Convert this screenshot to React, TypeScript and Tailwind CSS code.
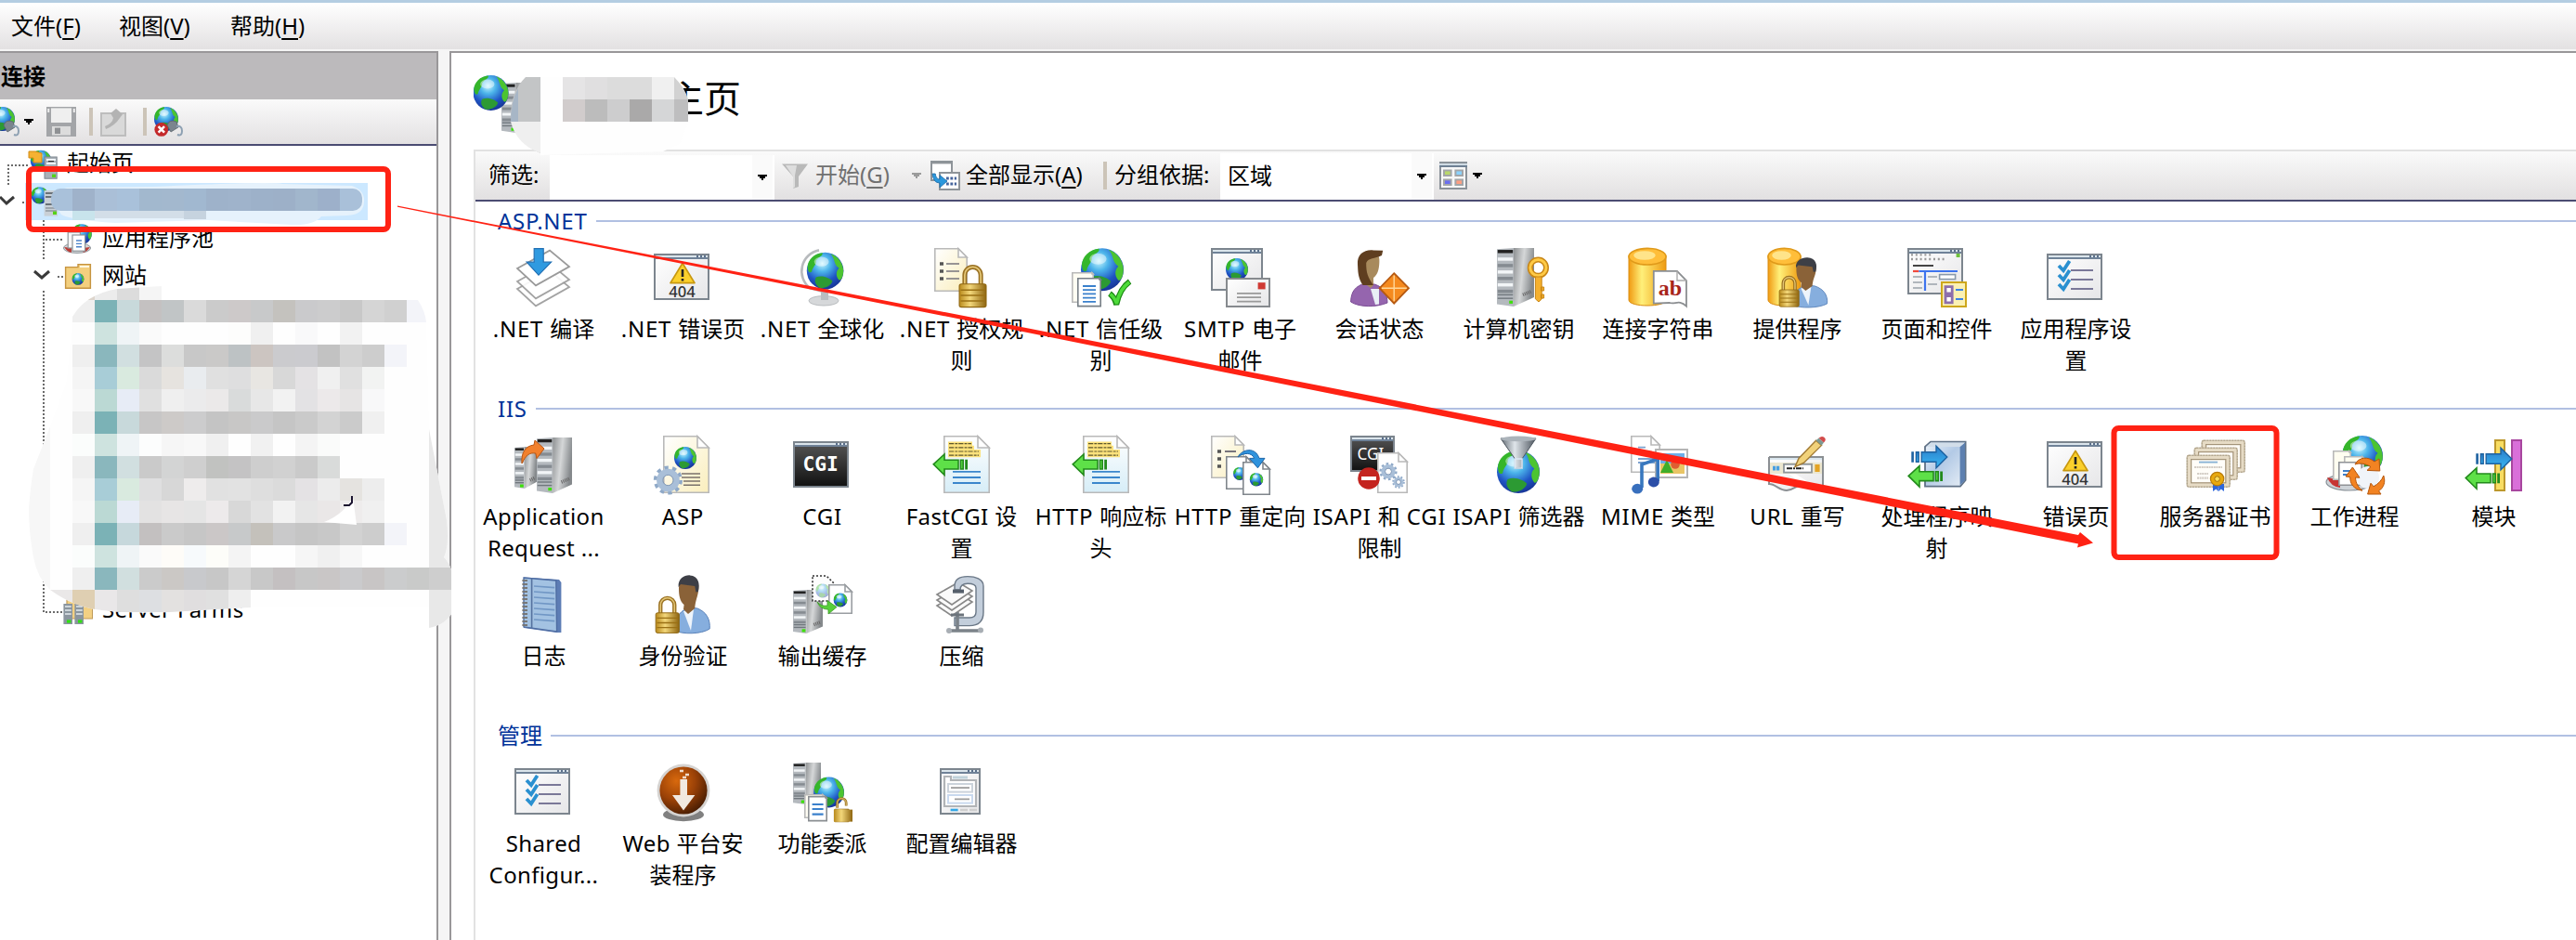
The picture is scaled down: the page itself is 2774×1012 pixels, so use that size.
import React from 'react';

type Box = { x: number; y: number; w: number; h: number };

const Defs: React.FC = () => (
  <svg width="0" height="0" className="absolute">
    <defs>
      <radialGradient id="sea" cx="0.42" cy="0.3" r="0.75">
        <stop offset="0" stopColor="#c8f6ff" />
        <stop offset="0.3" stopColor="#4cb4ea" />
        <stop offset="0.65" stopColor="#1f55c4" />
        <stop offset="1" stopColor="#16308f" />
      </radialGradient>
      <linearGradient id="steel" x1="0" y1="0" x2="1" y2="0.3">
        <stop offset="0" stopColor="#8d9092" />
        <stop offset="0.5" stopColor="#d5d7d8" />
        <stop offset="1" stopColor="#85898c" />
      </linearGradient>
      <linearGradient id="gold" x1="0" y1="0" x2="1" y2="0">
        <stop offset="0" stopColor="#b98a1c" />
        <stop offset="0.4" stopColor="#f3d77a" />
        <stop offset="1" stopColor="#8e6510" />
      </linearGradient>
      <linearGradient id="drum" x1="0" y1="0" x2="1" y2="0">
        <stop offset="0" stopColor="#f09a12" />
        <stop offset="0.35" stopColor="#fff07a" />
        <stop offset="1" stopColor="#ee9a10" />
      </linearGradient>
      <linearGradient id="paper" x1="0" y1="0" x2="1" y2="1">
        <stop offset="0" stopColor="#ffffff" />
        <stop offset="1" stopColor="#faeebc" />
      </linearGradient>
      <linearGradient id="bluePaper" x1="0" y1="0" x2="0" y2="1">
        <stop offset="0" stopColor="#ffffff" />
        <stop offset="1" stopColor="#d6edf7" />
      </linearGradient>
      <linearGradient id="pane" x1="0" y1="0" x2="1" y2="1">
        <stop offset="0" stopColor="#ffffff" />
        <stop offset="1" stopColor="#e6e6e8" />
      </linearGradient>
      <linearGradient id="night" x1="0" y1="0" x2="0" y2="1">
        <stop offset="0" stopColor="#555" />
        <stop offset="1" stopColor="#111" />
      </linearGradient>
      <linearGradient id="blueArrow" x1="0" y1="0" x2="0" y2="1">
        <stop offset="0" stopColor="#2b7cc8" />
        <stop offset="1" stopColor="#39b8f4" />
      </linearGradient>
      <linearGradient id="slab" x1="0" y1="0" x2="1" y2="1">
        <stop offset="0" stopColor="#eef4fa" />
        <stop offset="0.45" stopColor="#b3cae6" />
        <stop offset="1" stopColor="#e8eff6" />
      </linearGradient>
      <radialGradient id="amber" cx="0.35" cy="0.3" r="0.8">
        <stop offset="0" stopColor="#d8690d" />
        <stop offset="0.5" stopColor="#9c4207" />
        <stop offset="1" stopColor="#3c1802" />
      </radialGradient>
      <linearGradient id="funnelFill" x1="0" y1="0" x2="1" y2="0">
        <stop offset="0" stopColor="#5f676f" />
        <stop offset="0.4" stopColor="#dfe5ea" />
        <stop offset="1" stopColor="#4b535c" />
      </linearGradient>
    </defs>
  </svg>
);

const Globe = ({ x, y, r }: { x: number; y: number; r: number }) => (
  <g transform={`translate(${x} ${y}) scale(${r / 10})`}>
    <circle r="10" fill="url(#sea)" />
    <path d="M-9.6-2C-9.5-6-6-9.6-1.5-9.8-1-8-4-7.5-5-5.5-4.5-3.5-7-2-7.3.5-8.5 1.5-9.3.5-9.6-2Z" fill="#35b62a" />
    <path d="M3-9.3C7-8 9.8-4 9.9 0 9.8 3.5 8.5 5.5 7.5 5 5.5 2.5 6 0 7.5-1.5 4.5-3.5 5.5-6.5 3-9.3Z" fill="#4cc431" />
    <path d="M-5 3.5C-1.5 2 2.5 4 4 5.5 3.5 8-.5 9.8-3 9.3-5.5 7.5-6 5.5-5 3.5Z" fill="#2c9a33" />
    <ellipse cx="-2" cy="-5" rx="4" ry="2.6" fill="#fff" opacity="0.45" />
  </g>
);

const Server = ({ x, y, w, h }: Box) => {
  const f = w * 0.45;
  return (
    <g>
      <path d={`M${x + f} ${y}H${x + w}V${y + h * 0.84}L${x + f} ${y + h}Z`} fill="url(#steel)" />
      <path d={`M${x} ${y + h * 0.02}L${x + f} ${y}V${y + h}L${x} ${y + h * 0.96}Z`} fill="#b4b9be" />
      {[0.06, 0.19, 0.3, 0.41, 0.52, 0.63, 0.74].map((t, i) => (
        <path key={t} d={`M${x + 0.4} ${y + h * t}H${x + f - 0.4}`} stroke={i === 0 ? '#222' : i % 2 ? '#f2f5f7' : '#858b91'} strokeWidth={h * 0.055} />
      ))}
      {[0.8, 0.86].map((t) => (
        <path key={t} d={`M${x + 0.4} ${y + h * t}H${x + f - 0.4}`} stroke="#70777d" strokeWidth="0.7" />
      ))}
      <rect x={x + f - 2.4} y={y + h * 0.9} width="1.9" height="1.6" fill="#3ee00c" />
      <path d={`M${x + f + w * 0.25} ${y + h * 0.8}l${w * 0.22} ${-h * 0.06}`} stroke="#666" strokeWidth="1.8" strokeDasharray="0.5 0.5" />
    </g>
  );
};

const Doc = ({ x, y, w, h, fill = '#fff', stroke = '#b9b9b9', fold = 5 }: Box & { fill?: string; stroke?: string; fold?: number }) => (
  <g fill={fill} stroke={stroke} strokeWidth="0.8">
    <path d={`M${x + 0.4} ${y + 0.4}H${x + w - fold}L${x + w - 0.4} ${y + fold}V${y + h - 0.4}H${x + 0.4}Z`} />
    <path d={`M${x + w - fold} ${y + 0.4}V${y + fold}H${x + w - 0.4}Z`} fill="#fff" />
  </g>
);

const Frame = ({ x, y, w, h, fill = 'url(#pane)' }: Box & { fill?: string }) => (
  <g>
    <rect x={x + 0.5} y={y + 0.5} width={w - 1} height={h - 1} fill={fill} stroke="#7c858e" />
    <path d={`M${x + 1} ${y + 1.5}H${x + w - 1}`} stroke="#dbe5ec" />
    <path d={`M${x + 1} ${y + 2.5}H${x + w - 1}`} stroke="#6f8298" />
    <path d={`M${x + w - 7} ${y + 1.5}h6`} stroke="#5a6f8b" strokeDasharray="1 1" />
  </g>
);

const Lock = ({ x, y, s, open }: { x: number; y: number; s: number; open?: boolean }) => (
  <g transform={`translate(${x} ${y}) scale(${s})`}>
    <path d={open ? 'M3 9V4.5A4 4 0 0 1 11 4.5V7' : 'M3 11V5.5A4 4 0 0 1 11 5.5V11'} fill="none" stroke="#9a7122" strokeWidth="2.3" />
    <path d={open ? 'M3 9V4.5A4 4 0 0 1 11 4.5V7' : 'M3 11V5.5A4 4 0 0 1 11 5.5V11'} fill="none" stroke="#e5c878" strokeWidth="0.8" />
    <rect x="0.3" y="10" width="13.4" height="11.5" rx="1" fill="url(#gold)" stroke="#8e6510" strokeWidth="0.5" />
    <path d="M1 13h12M1 15.7h12M1 18.4h12" stroke="#9a7014" strokeWidth="0.7" />
  </g>
);

const Drum = ({ w }: { w: number }) => (
  <g>
    <path d={`M0 4V28C0 32 ${w} 32 ${w} 28V4Z`} fill="url(#drum)" stroke="#d98c10" strokeWidth="0.5" />
    <ellipse cx={w / 2} cy="4.6" rx={w / 2} ry="4.4" fill="#ffbe3a" stroke="#e09a1a" strokeWidth="0.8" />
    <ellipse cx={w / 2 - 1.5} cy="4" rx={w / 3.4} ry="2.4" fill="#ffe48a" />
  </g>
);

const Man = ({ x, y }: { x: number; y: number }) => (
  <g transform={`translate(${x} ${y})`}>
    <path d="M0 30C0 22 3 19 8 17.5L12 18C17 20 19 24 18.6 29 14 32 4 32 0 30Z" fill="#86aede" stroke="#5b83b9" strokeWidth="0.5" />
    <path d="M4.5 19.5L8.5 30 10 18.5Z" fill="#eef4fb" />
    <path d="M2 7C2 3 4.5.8 8 .8S13 4 12.6 8 11 13 10.6 18L7 21 4.5 18.5 4.8 16C2.5 14 2 11 2 7Z" fill="#8a6238" />
    <path d="M1.8 6.5C1.5 2 5 0 8 .2 12.5.6 13.6 4.5 12.4 9L11.2 9.2 10.6 6 3 5Z" fill="#3d3f46" />
  </g>
);

const LeftArrow = ({ x, y }: { x: number; y: number }) => (
  <g transform={`translate(${x} ${y})`} fill="#5ee048" stroke="#238a1c" strokeWidth="0.8">
    <path d="M.6 6L6.5.6V3.7H14V8.6H6.5V11.8Z" />
    <path d="M15.2 3.7h1.4v4.9h-1.4ZM18 3.9h.6v4.5H18Z" />
  </g>
);

const RightArrow = ({ x, y }: { x: number; y: number }) => (
  <g transform={`translate(${x} ${y})`} fill="url(#blueArrow)" stroke="#1e62a0" strokeWidth="0.7">
    <path d="M19.4 6.5L13.5.6V3.9H5.6V9.1H13.5V12.4Z" />
    <path d="M2.7 3.9h1.4v5.2H2.7ZM.5 4h.6v5H.5Z" />
  </g>
);

const Gear = ({ x, y, r }: { x: number; y: number; r: number }) => (
  <g fill="none" stroke="#8fa9c8">
    <circle cx={x} cy={y} r={r * 0.86} strokeWidth={r * 0.28} strokeDasharray={`${r * 0.27} ${r * 0.27}`} />
    <circle cx={x} cy={y} r={r * 0.58} strokeWidth={r * 0.42} stroke="#a9bfd8" />
    <circle cx={x} cy={y} r={r * 0.36} strokeWidth="0.5" stroke="#7a93b3" />
  </g>
);

const Error404 = () => (
  <>
    <Frame x={0} y={3} w={30} h={25} />
    <path d="M15.5 8.2L22 18.8H9Z" fill="#fbd02c" stroke="#c89810" strokeWidth="0.9" strokeLinejoin="round" />
    <path d="M15.5 11.5v4M15.5 16.5v1.2" stroke="#222" strokeWidth="1.3" />
    <text x="15.3" y="26.4" textAnchor="middle" fontSize="8.3" fontFamily="Noto Sans, sans-serif" fontWeight="500" fill="#333">404</text>
  </>
);

const ArrowDoc = () => (
  <>
    <Doc x={6} y={0} w={25} h={31} fill="url(#bluePaper)" fold={6.5} />
    <path d="M8.5 4.3H21.5M8.5 6.4H22.5M8.5 8.5H26M8.5 10.6H26" stroke="#fce27c" strokeWidth="2.1" />
    <path d="M9 4.3H21M9 6.4H21.5M9 8.5H25M9 10.6H25" stroke="#5d572d" strokeWidth="0.6" strokeDasharray="2.6 0.6 1.4 0.5" />
    <path d="M11 19.4H26M11 22.5H26M11 25.5H26" stroke="#3a86cc" strokeWidth="0.9" />
    <LeftArrow x={0} y={9.4} />
  </>
);

const Checklist = () => (
  <>
    <Frame x={0} y={3} w={30} h={25} />
    {[8, 13, 18].map((y) => (
      <g key={y}>
        <path d={`M6.5 ${y + 1.5}l2.5 2.6L12.3 ${y - 1}`} fill="none" stroke="#2a90d0" strokeWidth="1.9" />
        <path d={`M13 ${y + 4}H25`} stroke="#7a7898" strokeWidth="1" />
      </g>
    ))}
  </>
);

const FEATURE_ICONS: Record<string, React.ReactNode> = {
  compile: (
    <>
      {[11, 7, 0].map((dy) => (
        <path key={dy} d={`M1.5 ${dy + 11}L19 ${dy + 1.3}L29.5 ${dy + 10}L11.5 ${dy + 20.2}Z`} fill="#fff" stroke="#9a9a9a" strokeWidth="0.9" opacity={dy ? 0.9 : 1} />
      ))}
      <path d="M10.6.3h5v7.3h4.2L13 14.6 6.6 7.6h4Z" fill="#2f9ae0" stroke="#2270b4" strokeWidth="0.6" />
    </>
  ),
  error404: <Error404 />,
  globalization: (
    <>
      <ellipse cx="16.5" cy="28.4" rx="8" ry="2.6" fill="#d6d8da" stroke="#b9bcbf" strokeWidth="0.5" />
      <path d="M15 22h4v6h-4Z" fill="#b9bdc0" />
      <path d="M14 1.2A11.5 11.5 0 0 0 9 21.5L18 24" fill="none" stroke="#b7babd" strokeWidth="1.3" />
      <Globe x={17.3} y={12.3} r={9.9} />
    </>
  ),
  authRules: (
    <>
      <Doc x={1} y={0} w={18} h={23.5} fill="url(#paper)" />
      <path d="M7.5 8.5h7M7.5 12.5h7M7.5 16.5h7" stroke="#77747c" strokeWidth="0.8" />
      <path d="M4 8.5h2M4 12.5h2M4 16.5h2" stroke="#555" strokeWidth="1.8" />
      <Lock x={14.2} y={8.6} s={1.08} />
    </>
  ),
  trust: (
    <>
      <Globe x={16.5} y={11.6} r={11.5} />
      <Doc x={0} y={13} w={12} h={16.5} fill="#fffdf3" fold={1} />
      <Doc x={3} y={16} w={13} h={15.7} fold={1} stroke="#777f86" />
      <path d="M6 20.5h7M6 22.6h7M6 24.7h7M6 26.8h7M6 28.9h7" stroke="#3a80cc" strokeWidth="0.9" />
      <path d="M20.5 24.5c2 1.5 3 3.5 3.6 6 1-5 3-9.5 7.2-12.5" fill="none" stroke="#1c8a14" strokeWidth="3" />
      <path d="M20.8 24.8c2 1.5 2.8 3.2 3.4 5.2 1-5 3-8.8 6.8-11.6" fill="none" stroke="#4edb3a" strokeWidth="1.8" />
    </>
  ),
  smtp: (
    <>
      <Frame x={0} y={0} w={28} h={23} />
      <Globe x={14} y={11.5} r={6} />
      <rect x="8.5" y="16.5" width="23" height="15" fill="url(#pane)" stroke="#868a8e" />
      <rect x="25.3" y="18.6" width="4" height="3.6" fill="#cf3a34" />
      <path d="M14 24.4h13M14 26.6h13M14 28.8h13" stroke="#999" strokeWidth="0.9" />
    </>
  ),
  session: (
    <>
      <path d="M.3 29C.5 23 3 20.5 8 19L13 19.5C18 21 20 25 20 29.5 14 32 5 32 .3 29Z" fill="#9565ae" stroke="#7b4d95" strokeWidth="0.5" />
      <path d="M11 22l2.5 8.5 2-.3V22Z" fill="#e9eef6" />
      <path d="M5.5 8C5 4 8 2 11.5 2 15.5 2.3 16 5 15.6 9 15.3 13 14 15 12.5 16V20L11 21.5 7.5 19V14C6 12 5.6 10 5.5 8Z" fill="#a88a5d" />
      <path d="M4 9C3.5 3 8 .6 12.5 1.2L17.6 1.4 17 4C13 6 10 5 8.6 8 8.5 13 9.5 16 12.5 20H6.8C4 16 4.2 12 4 9Z" fill="#5f3e20" />
      <path d="M23.6 13.6L31.5 21.6 23.6 29.8 15.8 21.6Z" fill="#f58a1e" stroke="#b65a12" strokeWidth="0.9" />
      <path d="M23.6 14.8V28.6M17 21.6H30.4" stroke="#ffd79a" strokeWidth="0.7" />
    </>
  ),
  machineKey: (
    <>
      <Server x={4} y={0} w={20} h={31.5} />
      <circle cx="26.2" cy="10.6" r="4.3" fill="none" stroke="#c98716" strokeWidth="3" />
      <circle cx="26.2" cy="10.6" r="4.3" fill="none" stroke="#ffca45" strokeWidth="1.5" />
      <path d="M24.7 15.5h3.4v12L26.5 29l-1.8-1.6Zm3 5.5h1.6v2h-1.6Zm0 4h1.6v2h-1.6Z" fill="#f5b02e" stroke="#c98716" strokeWidth="0.5" />
    </>
  ),
  connStrings: (
    <>
      <Drum w={20} />
      <path d="M13.4 12.4H26L31 17.5V31.3C27 27.5 25 30.5 22 29.5L13.4 29.8Z" fill="#fff" stroke="#8b8e91" strokeWidth="0.9" />
      <path d="M26 12.4V17.5H31" fill="none" stroke="#aaa" strokeWidth="0.7" />
      <text x="22.2" y="25.5" textAnchor="middle" fontSize="12" fontWeight="bold" fontFamily="Liberation Serif, serif" fill="#a8251c">ab</text>
    </>
  ),
  providers: (
    <>
      <Drum w={17.5} />
      <g transform="translate(13.2 5) scale(1 .86)"><Man x={0} y={0} /></g>
      <Lock x={5.8} y={14.6} s={0.79} />
    </>
  ),
  pages: (
    <>
      <Frame x={0} y={0} w={30} h={25} />
      <path d="M2 3.7h12M2 6h18" stroke="#999" strokeWidth="1.2" strokeDasharray="1 1.4" />
      <path d="M26.3 3h2v2h-2Z" fill="#6fc23c" />
      <path d="M3 9.5h11" stroke="#444" />
      <path d="M3 12.5h3.2" stroke="#f0483c" strokeWidth="1.1" />
      <path d="M6.2 12.5H27M9.5 12.5V23" stroke="#3e74ee" strokeWidth="1.1" />
      <path d="M3 15.5h5M3 18.5h5M3 21.5h5M11 15.5h5M11 19.5h5" stroke="#9ba2ab" strokeWidth="0.8" />
      <rect x="17.3" y="14.3" width="8.5" height="2.5" fill="#fff" stroke="#8999aa" strokeWidth="0.8" />
      <rect x="18.5" y="18.5" width="13" height="13" fill="#fbf1b4" stroke="#cda71c" />
      <path d="M20.5 20.8h3.6v3.6h-3.6ZM20.5 25.8h3.6v3.6h-3.6Z" fill="#fff" stroke="#8d6fac" strokeWidth="1.4" />
      <path d="M26 22.5h4M26 27.5h4" stroke="#3b83e4" strokeWidth="0.9" />
    </>
  ),
  checklist: <Checklist />,
  arr: (
    <>
      <Server x={0} y={6} w={12} h={22.5} />
      <Server x={12} y={1} w={19} h={30} />
      <path d="M4 15C3.5 9 6 5.5 10.5 5L11 2.5 16 7 12 12.3 11.4 9.5C8 9 6.2 10.5 4 15Z" fill="#f2802c" stroke="#b95512" strokeWidth="0.5" />
    </>
  ),
  asp: (
    <>
      <Doc x={5} y={0} w={25} h={31} fill="url(#paper)" fold={6.5} />
      <Globe x={17} y={12} r={6} />
      <path d="M15 20.5H25M15 22.5H25M16 24.5H25M16 26.6H25" stroke="#79716b" strokeWidth="0.7" />
      <Gear x={7.7} y={24} r={7.8} />
    </>
  ),
  cgi: (
    <>
      <Frame x={0} y={3} w={30} h={25} fill="url(#night)" />
      <text x="14.8" y="18.8" textAnchor="middle" fontSize="10.6" fontWeight="bold" fontFamily="DejaVu Sans Mono, monospace" fill="#fff">CGI</text>
    </>
  ),
  arrowDoc: <ArrowDoc />,
  redirect: (
    <>
      <Doc x={0} y={0} w={18} h={23} fill="url(#paper)" />
      <path d="M7.5 8.5h6" stroke="#77747c" />
      <path d="M3.5 8.5h2M3.5 12.5h2M3.5 16.5h2" stroke="#555" strokeWidth="1.8" />
      <Doc x={8} y={11} w={15} h={18} stroke="#80868c" fold={4} />
      <Globe x={15.5} y={20.5} r={3.5} />
      <Doc x={17} y={14} w={15} h={18} stroke="#80868c" fold={4} />
      <Globe x={24.5} y={23.7} r={3.6} />
      <path d="M14.5 11.5C17 7 24 6 26 12.2h3L25.2 17.4 20.8 12.2h2.5C22 9 18 9 14.5 11.5Z" fill="#2f93dd" stroke="#1f66a8" strokeWidth="0.5" />
    </>
  ),
  isapiCgi: (
    <>
      <Frame x={0} y={0} w={24} h={19.5} fill="url(#night)" />
      <text x="11" y="12.8" textAnchor="middle" fontSize="8.6" fontFamily="Noto Sans, sans-serif" fill="#fff">CGI</text>
      <Doc x={14.5} y={9} w={16.5} h={22} />
      <Gear x={20.5} y={19.3} r={4.8} />
      <Gear x={26} y={25} r={3.4} />
      <circle cx="10" cy="23" r="5.9" fill="#c4241f" />
      <path d="M6 23H14" stroke="#fff" strokeWidth="2" />
    </>
  ),
  isapiFilter: (
    <>
      <Globe x={15.5} y={19.5} r={11.5} />
      <path d="M6 1.5H25L17.5 12.5V17.5H13.7V12.5Z" fill="url(#funnelFill)" stroke="#4d565f" strokeWidth="0.5" />
      <ellipse cx="15.5" cy="1.7" rx="9.5" ry="1.4" fill="#abb3ba" />
      <path d="M13.7 12.5h3.8v5h-3.8Z" fill="none" stroke="#dce8f5" strokeWidth="0.8" />
    </>
  ),
  mime: (
    <>
      <Doc x={1} y={0} w={16} h={20} />
      <path d="M5 6.3h4M5 12.5h9M5 14.5h9" stroke="#7ea3cf" strokeWidth="0.9" />
      <rect x="14.5" y="7.5" width="17" height="15" fill="#fff" stroke="#b5b5b5" />
      <path d="M17 9.5H30V15H17Z" fill="#6caee9" />
      <path d="M17 15H30V20.5H17Z" fill="#e9c565" />
      <path d="M17 20L20.5 13 24 20Z" fill="#3fae2a" />
      <circle cx="25" cy="15.5" r="2.4" fill="#de5d33" />
      <path d="M7 28V15.5L15.6 12.5V24.5" fill="none" stroke="#3878bf" strokeWidth="1.8" />
      <ellipse cx="4.6" cy="28.6" rx="3" ry="2.7" fill="#386fbd" />
      <ellipse cx="13.4" cy="25" rx="3" ry="2.7" fill="#2c4fa8" />
    </>
  ),
  rewrite: (
    <>
      <path d="M.5 11.5H29.5V30M.5 11.5V26C4 26 6 29.5 10 29.5S15 26 19 27" fill="url(#pane)" stroke="#8b8f93" />
      <path d="M1 12.5H29" stroke="#d9e6ee" />
      <rect x="1" y="14.5" width="28" height="6" fill="#ece7d0" />
      <rect x="8.5" y="15.4" width="15" height="4.4" fill="#fff" stroke="#8e959b" strokeWidth="0.9" />
      <path d="M10 17.6h9" stroke="#222" strokeWidth="1" strokeDasharray="3 .5 1 .5" />
      <path d="M2.5 17.6h4" stroke="#4a9fe0" strokeWidth="2.4" strokeDasharray="1.6 .4" />
      <path d="M26.5 15.5v4" stroke="#e3a326" strokeWidth="2.6" />
      <path d="M14.5 16.8L16.5 12.2 25.8 2.6 28.8 5.2 19.3 14.6Z" fill="#f1d27a" stroke="#a17a34" strokeWidth="0.7" />
      <path d="M25.8 2.6L27.3 1.2 30 3.8 28.8 5.2Z" fill="#7d9a94" />
      <path d="M27.3 1.2Q29-.2 30.3 1T30 3.8Z" fill="#d34b4b" />
    </>
  ),
  handler: (
    <>
      <path d="M9.5 6L12.5 3.3H31.3V24L28.5 27.3H9.5Z" fill="url(#slab)" stroke="#5f7186" strokeWidth="0.9" />
      <path d="M28.3 6L31 3.6V24L28.3 26.8Z" fill="#5d80b0" />
      <path d="M10 6L12.6 3.8H31L28.3 6Z" fill="#d2deea" />
      <RightArrow x={2} y={5} />
      <LeftArrow x={0} y={15.7} />
    </>
  ),
  cert: (
    <>
      {[[8, 2], [4, 6], [0, 10]].map(([x, y]) => (
        <g key={x}>
          <rect x={x + 0.6} y={y + 0.6} width="23" height="17" rx="1" fill="#e6dbc5" stroke="#b3a68d" strokeWidth="0.8" strokeDasharray="1.2 0.3" />
          <rect x={x + 2.8} y={y + 2.8} width="18.6" height="12.6" fill="#fffdf8" stroke="#a49479" strokeWidth="0.6" />
        </g>
      ))}
      <path d="M7 14.3h10" stroke="#86b2d5" strokeWidth="0.9" />
      <path d="M4.5 17h15M6 20.5h6M6 22.8h6" stroke="#d3cdc5" strokeWidth="1.1" strokeDasharray="1 .3" />
      <path d="M14.5 26v4l1.7-1.2 1.2 1.2V26ZM17.6 26v4l1.3-1.2 1.6 1.2V26Z" fill="#2c66dc" />
      <circle cx="16.8" cy="23.3" r="3.6" fill="#e8a90e" stroke="#b87a08" strokeWidth="0.6" />
      <circle cx="16.8" cy="23.3" r="1.4" fill="#f9dc5b" stroke="#a66f0a" strokeWidth="0.5" />
    </>
  ),
  worker: (
    <>
      <Globe x={20} y={11} r={11} />
      <ellipse cx="13" cy="25" rx="12.5" ry="4.5" fill="#ced3d8" stroke="#8a9299" strokeWidth="0.6" />
      <path d="M1 22.5Q3 27.5 8 28V24Z" fill="#c73434" />
      <Doc x={4} y={8} w={10} h={16} fill="#fffdf0" fold={1} />
      <Doc x={10} y={11} w={11} h={15} fill="#fffdf0" fold={1} />
      <Doc x={7} y={14} w={13} h={13} fold={1} stroke="#8f9296" />
      <path d="M9.5 19h4M9.5 21h4" stroke="#3f7fc9" />
      <circle cx="23" cy="22.5" r="6" fill="#f0f4f9" />
      <g fill="#f28322" stroke="#b5560c" strokeWidth="0.5">
        <path d="M16 15.5C18 11.5 23 11 26.5 14L29 12.5 29.4 19 22.5 18.7 24.5 16.8C21.5 15 18.5 14.5 16 15.5Z" />
        <path d="M20 29.6C15.5 29 13.2 26 13.4 22.3L11 22 14.7 17 18.5 22.6 16.3 22.5C16.3 25.5 17.8 28 20 29.6Z" />
        <path d="M31.4 21.5C32.6 25 31.5 28 28.8 29.8L30 31.5 22.8 31.5 24.5 25.6 26 27.4C28.5 26 30.5 24 31.4 21.5Z" />
      </g>
    </>
  ),
  modules: (
    <>
      <rect x="16.5" y="2.5" width="5" height="27" fill="#f8dd62" stroke="#bd982c" />
      <rect x="25.5" y="2.5" width="5" height="27" fill="#d96fd9" stroke="#a8469f" />
      <RightArrow x={6} y={6} />
      <LeftArrow x={0} y={16.8} />
    </>
  ),
  logging: (
    <>
      <path d="M5 1.2L24 2.5 25.2 4V31H22.5L5 28.5Z" fill="#5d7db5" />
      <path d="M5 1.5L22.4 3 22.8 30.5 5 28Z" fill="#a3c2e2" stroke="#4f6da2" strokeWidth="0.7" />
      {[6, 9, 12, 15, 18, 21, 24].map((y) => (
        <path key={y} d={`M10.5 ${y}L21.6 ${y + 0.8}`} stroke="#7197c5" strokeWidth="0.8" />
      ))}
      <path d="M9.3 2V28.5" stroke="#55729f" strokeWidth="0.8" />
      <path d="M5.6 2.5V28" stroke="#777" strokeWidth="2.8" strokeDasharray="1 1" />
    </>
  ),
  authn: (
    <>
      <g transform="translate(11 0)"><Man x={0.5} y={0} /></g>
      <Lock x={0.8} y={11} s={0.94} />
    </>
  ),
  cache: (
    <>
      <Server x={0} y={8} w={16} h={23.5} />
      <path d="M10.5.5H18L22 4.5V14H10.5Z" fill="#fdfdfd" stroke="#333" strokeWidth="0.8" strokeDasharray="1 1" />
      <g opacity="0.4"><Globe x={16} y={8.5} r={3.8} /></g>
      <Doc x={19} y={5} w={13} h={16} stroke="#9a9ea2" fold={4} />
      <Globe x={25.5} y={13.5} r={3.7} />
      <path d="M13 14.5Q15 17 18.5 16.5V13.8L23.5 17.3 19 21V18.6Q14.5 18.5 13 14.5Z" fill="#58cf3a" stroke="#3b9a25" strokeWidth="0.4" />
    </>
  ),
  compress: (
    <>
      {[6, 3, 0].map((dy) => (
        <path key={dy} d={`M2.5 ${dy + 10.5}L14 ${dy + 4}L21.5 ${dy + 8.5}L10.5 ${dy + 16}Z`} fill="#fafafa" stroke="#888" strokeWidth="0.8" />
      ))}
      <path d="M12 8V6C12 2 15 .8 19 .8S27.5 2 27.5 6V20C27.5 25.5 24 27.3 20 27.3H12V23H20C22.5 23 23.5 22 23.5 20V7C23.5 5 21.5 4.6 19 4.6S15 5.5 15 8Z" fill="#c3cedb" stroke="#6b7887" strokeWidth="0.7" />
      <path d="M11 8.8h6" stroke="#555f6b" strokeWidth="2" />
      <path d="M13.5 20v10M8 30H26" stroke="#7b8289" strokeWidth="1.8" />
      <circle cx="9" cy="30" r="1.5" fill="#a8aeb4" /><circle cx="26" cy="29.8" r="1.5" fill="#a8aeb4" />
      <path d="M10 21.5h7" stroke="#6b737b" strokeWidth="1.5" />
    </>
  ),
  webpi: (
    <>
      <ellipse cx="16" cy="28" rx="11" ry="3.6" fill="#555" opacity="0.75" />
      <circle cx="16" cy="15" r="14.2" fill="#d5d3d1" />
      <circle cx="16" cy="15" r="12.8" fill="url(#amber)" />
      <path d="M14.2 9h3.8v8.5h4.2L16 25.8 10 17.5h4.2Z" fill="#f1e9e0" />
      <path d="M14 4.5h2M17 6.5h2M15.5 8h2" stroke="#f0dccb" strokeWidth="1.2" />
    </>
  ),
  delegation: (
    <>
      <Server x={0} y={0} w={15} h={22.5} />
      <Globe x={19.3} y={16} r={8.2} />
      <Doc x={6} y={17} w={11} h={13} fill="#fffdf3" fold={1} />
      <Doc x={8} y={18} w={10.5} h={13.7} fold={1} stroke="#8a8e92" />
      <path d="M10.3 22.5h6M10.3 25h6M10.3 27.8h6" stroke="#3a80cc" strokeWidth="1.1" />
      <Lock x={22} y={19} s={0.6} open />
      <rect x="22" y="25.3" width="10" height="6.5" fill="url(#gold)" />
    </>
  ),
  configEditor: (
    <>
      <Frame x={4} y={3} w={22} h={25} />
      <path d="M6.5 7.5H10V9.5H23.5V23.5H6.5Z" fill="#fff" stroke="#b1b4b7" strokeWidth="1.1" />
      <path d="M11 8h8" stroke="#c0d2db" strokeWidth="1.5" />
      <rect x="8.5" y="11.5" width="13" height="4.3" fill="#fff" stroke="#cbd3db" />
      <path d="M10 13.6h10M12 19.7h8" stroke="#9b9b9b" strokeWidth="0.9" />
      <rect x="8.5" y="17.5" width="13" height="4.3" fill="none" stroke="#c9d9ee" />
      <path d="M9.8 25.5h4" stroke="#33a7e6" strokeWidth="1.3" />
      <path d="M15 25.5h4M20 25.5h4" stroke="#cfcfcf" strokeWidth="1.3" />
    </>
  ),
};

type Feature = { icon: string; lines: string[] };
type Group = { title: string; height: string; rows: Feature[][] };

const f = (icon: string, ...lines: string[]): Feature => ({ icon, lines });

const GROUPS: Group[] = [
  {
    title: 'ASP.NET',
    height: 'h-[202px]',
    rows: [[
      f('compile', '.NET 编译'), f('error404', '.NET 错误页'), f('globalization', '.NET 全球化'),
      f('authRules', '.NET 授权规', '则'), f('trust', '.NET 信任级', '别'), f('smtp', 'SMTP 电子', '邮件'),
      f('session', '会话状态'), f('machineKey', '计算机密钥'), f('connStrings', '连接字符串'),
      f('providers', '提供程序'), f('pages', '页面和控件'), f('checklist', '应用程序设', '置'),
    ]],
  },
  {
    title: 'IIS',
    height: 'h-[352px]',
    rows: [
      [
        f('arr', 'Application', 'Request ...'), f('asp', 'ASP'), f('cgi', 'CGI'), f('arrowDoc', 'FastCGI 设', '置'),
        f('arrowDoc', 'HTTP 响应标', '头'), f('redirect', 'HTTP 重定向'), f('isapiCgi', 'ISAPI 和 CGI', '限制'),
        f('isapiFilter', 'ISAPI 筛选器'), f('mime', 'MIME 类型'), f('rewrite', 'URL 重写'),
        f('handler', '处理程序映', '射'), f('error404', '错误页'), f('cert', '服务器证书'),
        f('worker', '工作进程'), f('modules', '模块'),
      ],
      [f('logging', '日志'), f('authn', '身份验证'), f('cache', '输出缓存'), f('compress', '压缩')],
    ],
  },
  {
    title: '管理',
    height: 'h-[202px]',
    rows: [[
      f('checklist', 'Shared', 'Configur...'), f('webpi', 'Web 平台安', '装程序'),
      f('delegation', '功能委派'), f('configEditor', '配置编辑器'),
    ]],
  },
];

// latin runs are set a little wider than the CJK glyphs around them
const Label: React.FC<{ text: string }> = ({ text }) => (
  <>
    {text.split(/([\x20-\x7e]+)/).map((part, i) => {
      if (i % 2 === 0) return part;
      return <span key={i} className={/[a-z]/.test(part) ? 'tracking-[0.35px]' : 'tracking-[0.75px]'}>{part}</span>;
    })}
  </>
);

const FeatureItem: React.FC<{ item: Feature }> = ({ item }) => (
  <div className="w-[150px] h-[150px] shrink-0 flex flex-col items-center">
    <svg width="64" height="64" viewBox="0 0 32 32" className="shrink-0 overflow-visible">{FEATURE_ICONS[item.icon]}</svg>
    <div className="mt-[6px] -ml-[1px] flex flex-col items-center">
      {item.lines.map((line) => (
        <span key={line} className="h-[34px] leading-[34px] whitespace-pre"><Label text={line} /></span>
      ))}
    </div>
  </div>
);

const Caret = ({ className = 'text-black' }: { className?: string }) => (
  <svg width="10" height="6" viewBox="0 0 10 6" className={`shrink-0 ${className}`}>
    <path d="M0 0H10V2H8V4H6V6H4V4H2V2H0Z" fill="currentColor" />
  </svg>
);

const Separator = () => <div className="w-[4px] h-[30px] bg-[#ccc4b8] shrink-0" />;

const GlobePlug = ({ error }: { error?: boolean }) => (
  <svg width="32" height="32" viewBox="0 0 16 16" className="shrink-0">
    <Globe x={6.5} y={6.5} r={6.5} />
    <path d="M7 10Q8 6.5 12 8l1 3-4 2.5Z" fill="#7b858e" stroke="#5b646c" strokeWidth="0.4" />
    <path d="M12 10.5Q15 10 15 13T12.5 15" fill="none" stroke="#8da0b2" strokeWidth="1" />
    {error && (
      <>
        <circle cx="3.9" cy="12.2" r="3.7" fill="#c42a2c" />
        <path d="M2.3 10.6l3.2 3.2M5.5 10.6L2.3 13.8" stroke="#fff" strokeWidth="1.3" />
      </>
    )}
  </svg>
);

const MENU = [
  { label: '文件', hotkey: 'F', place: 'w-[116px]' },
  { label: '视图', hotkey: 'V', place: 'w-[120px]' },
  { label: '帮助', hotkey: 'H', place: 'w-[120px]' },
];

const MenuBar: React.FC = () => (
  <div className="h-[53px] shrink-0 border-t-[3px] border-[#b4cde2] bg-gradient-to-b from-[#ffffff] to-[#e3e1e2] flex pl-[12px] pt-[8px]">
    {MENU.map((m) => (
      <div key={m.label} className={`${m.place} h-[34px] leading-[34px] whitespace-nowrap`}>
        {m.label}(<span className="underline underline-offset-4">{m.hotkey}</span>)
      </div>
    ))}
  </div>
);

const TreeLines = () => (
  <svg width="470" height="855" className="absolute left-0 top-0" fill="none">
    <g stroke="#6b6b6b" strokeWidth="2" strokeDasharray="2 2">
      <path d="M9 42V21H30M24 61h4M47 80V122M49 101H68M62 141h6M47 156V502H68" />
    </g>
    <g stroke="#3a3a3a" strokeWidth="3">
      <path d="M0 55L7 62 15 55M37 135L45 142 53 135" />
    </g>
  </svg>
);

const StartPageIcon = () => (
  <svg width="32" height="32" viewBox="0 0 16 16" className="shrink-0">
    <Globe x={7} y={6} r={5.6} />
    <path d="M.5 1H4L7.5 2V7H3V4.5H.5Z" fill="#f5b233" stroke="#d28a12" strokeWidth="0.5" />
    <rect x="9" y="4" width="6.6" height="11.6" fill="#a9b1b8" stroke="#7e878f" strokeWidth="0.5" />
    <path d="M10 5.5h5M10 7.5h5" stroke="#eef3f7" strokeWidth="0.9" />
    <path d="M11 6.3h3" stroke="#333" strokeWidth="0.6" />
    <rect x="13" y="13.3" width="2" height="1.7" fill="#55d318" />
  </svg>
);

const HostIcon = () => (
  <svg width="32" height="32" viewBox="0 0 16 16" className="shrink-0">
    <Globe x={4.9} y={4.7} r={4.6} />
    <rect x="7.3" y="2" width="7.2" height="13.8" fill="#c9d0d6" />
    <path d="M8 3.5h6M8 5.5h6M8 9.5h6" stroke="#4b5258" strokeWidth="0.8" />
    <path d="M8 11.5h6M8 13h6" stroke="#8f979e" strokeWidth="0.7" />
    <rect x="12" y="13.3" width="2" height="1.7" fill="#55d318" />
  </svg>
);

const PoolIcon = () => (
  <svg width="32" height="32" viewBox="0 0 16 16" className="shrink-0">
    <Globe x={10} y={5.5} r={5.4} />
    <ellipse cx="7.5" cy="13" rx="7.3" ry="2.7" fill="#d5d9dc" stroke="#8e959b" strokeWidth="0.5" />
    <path d="M.6 12.5Q2 15 4.5 15.4V13ZM14.4 12.5Q13 15 10.8 15.4V13Z" fill="#bb3b35" />
    <rect x="2.6" y="4.5" width="6.6" height="8.5" fill="#f7f7f7" stroke="#8f9498" strokeWidth="0.6" />
    <rect x="5" y="6" width="6.8" height="8.6" fill="#fff" stroke="#8f9498" strokeWidth="0.6" />
    <path d="M7 9h3M7 10.7h3M7 12.4h3" stroke="#4d83c9" strokeWidth="0.7" />
  </svg>
);

const SitesIcon = () => (
  <svg width="32" height="32" viewBox="0 0 16 16" className="shrink-0">
    <path d="M1.3 3.3H8V1.8H14.7V14.6H1.3Z" fill="#f3cf7e" stroke="#c69440" strokeWidth="0.7" />
    <path d="M9 3h5" stroke="#fff7df" strokeWidth="1" />
    <Globe x={8} y={9.7} r={3.2} />
  </svg>
);

const FarmIcon = () => (
  <svg width="32" height="32" viewBox="0 0 16 16" className="shrink-0">
    <path d="M2 1H15.8V12.5H2Z" fill="#f3d083" stroke="#bf9a58" strokeWidth="0.6" />
    {[0, 6].map((x) => (
      <g key={x}>
        <rect x={x + 0.2} y="4.5" width="4.8" height="11" fill="#8b959e" />
        <path d={`M${x + 1} 6h3.4M${x + 1} 8h3.4M${x + 1} 10h3.4`} stroke="#e4eaee" strokeWidth="0.8" />
        <rect x={x + 2} y="13.2" width="2.2" height="1.6" fill="#2fe212" />
      </g>
    ))}
  </svg>
);

// pixelated cover, one string per 24px row, cells separated by blanks ("-" is empty)
const MOSAIC = [
  '- ddd5cc ececec dcdcdc f5f5f5',
  '- efefef 7bb2b6 c8d9db c4c1c1 c1c5c6 dadada cbcbcb cdc9c9 c8c9ca c4c2be cacacc cccccd c8c8c8 d5d5d5 d0d0d0 f3f4f9',
  '- fdfdfd cee3df eff4f6 fafafa - - - fdfdfc f0f0f0 - f9f9fa - f2f2f2',
  '- efefef 8ab7bd d1dfe0 c4c4c5 dcdddc c8c8c8 cac9c8 bdc2c4 ccc5c1 cbcbce cbcbcf c2c2c2 d3d3d3 cdcdcd f3f4f9',
  '- f5f5f5 a8cdd7 d9eadf dadada e6e3df e9ecef e0e0e0 dededf e8e6e2 d8d8d8 e4e2e4 f0f0f0 e0e0e0 f2f3f2',
  '- f8f8f8 bbd9d4 e7ecf6 e0e0e0 efefef ebebec ebe9e9 d9dbdb e7e7e7 f2f2f2 e3e2e4 ece9ea e6e4e4 f8f8f9',
  '- efefef 7bb2b6 c8d9db c7c6c6 cdcac8 cccccd c4c4c4 c8c7c6 cacacb c5c5c5 cacaca d3d3d3 cbcbcb f0f0f0',
  '- fbfdfc cee3df eff4f6 fcfdfd f6f6f6 f8f8f8 f0f0f0 - f1f1f1 - f4f4f4 fafbfa',
  '- efefef 8ab7bd d1dfe0 cacaca d3d4d4 cfcfcf c1c2c0 c4c3c4 cecece d1d1d1 cacaca d9dbda',
  '- f5f5f5 a8cdd7 d9eadf dfdfe0 d7d7d7 eeecec e1e1e1 e2e2e2 dedede dbdbdb e4e2e4 ececec e5e3e0 ededed',
  '- f8f8f8 bbd9d4 e7ecf6 e3e2e2 e7e5e5 e5e5e5 edeaeb d8d8d8 e2e2e2 f2f2f2 e6e6e6 eae7e7 eeecec f0f0f0',
  '- efefef 7bb2b6 c6d8dc c3c0c0 cacaca c6c6c6 cbc7c7 c7c9ca c4c1bb c9c9ca c5c5c5 c8c8c8 d2d2d2 cdcdcd f3f4f9',
  '- fbfdfc cee3df eff4f6 fafafa fefcf8 f7fafc fdfdf9 f4f4f4 - - f6f6f6 f0f0f0 f7f7f7',
  '- efefef 8ab7bd d1dfdf cbcbcb cbc8c5 c8c9cc c7c7c7 d5d5d5 c8c8c8 c4c0c1 c7c7c7 c9c6c6 cacacc c8c5c5 cbcccd c9cac9 cecece',
  'eae8e8 dfcfb2 e9e7e8 dedede dddfe2 e3e1e0 e0dedf e0e0e0 eeeeee',
];

const TreeCover = () => (
  <svg width="487" height="855" className="absolute left-0 top-0">
    <defs>
      <clipPath id="brush">
        <path d="M78 184Q92 160 126 154L174 151V166H450Q458 178 459 190L462 305 481 403Q484 430 478 443Q488 452 488 475V500Q482 515 462 519V497H270L232 499 200 501Q150 505 110 500Q80 497 54 478Q40 465 36 443Q31 415 31 391Q33 365 36 348L54 302 72 253Z" />
      </clipPath>
    </defs>
    <g clipPath="url(#brush)">
      <rect x="30" y="140" width="460" height="380" fill="#fefefe" />
      <rect x="30" y="290" width="24" height="188" fill="#f7f7f7" />
      <rect x="462" y="300" width="24" height="230" fill="#e8e8e8" />
      {MOSAIC.map((row, r) =>
        row.split(' ').map((c, i) =>
          c === '-' ? null : (
            <rect key={`${r}-${i}`} x={54 + i * 24} y={142 + r * 24} width="24" height="24" fill={`#${c}`} shapeRendering="crispEdges" />
          )
        )
      )}
    </g>
    <path d="M349 405Q370 397 380 378L384 408Z" fill="#fff" />
    <path d="M370 387H376L379 384V377" fill="none" stroke="#1b1430" strokeWidth="2" />
  </svg>
);

const HOST_CELLS = ['9fb2ca', 'aabfd7', 'a9c1da', 'a2b8ce', 'a3b8ce', 'a1b8d0', '9eb2ca', '9fb3cb', '9db1c9', '9db0c8', 'a1b6cc', '9db0ca', 'a9c0d9'];

const HostCover = () => (
  <svg width="345" height="46" className="absolute left-[54px] top-[40px]">
    <path d="M3 20Q5 8 18 5L110 4Q240-2 250 1L325 3Q339 8 338 20 338 34 320 35L292 36Q284 46 260 45L170 40 70 43Q22 40 12 34Z" fill="#e6f2fc" />
    <clipPath id="hostBrush"><rect x="1" y="6" width="335" height="24" rx="10" /></clipPath>
    <g clipPath="url(#hostBrush)">
      <rect x="0" y="6" width="24" height="24" fill="#a9c1da" />
      {HOST_CELLS.map((c, i) => (
        <rect key={i} x={24 + i * 24} y="6" width="24" height="24" fill={`#${c}`} shapeRendering="crispEdges" />
      ))}
    </g>
    <path d="M24 30h24v10H24Z" fill="#c8e4ec" />
    <path d="M48 30H144V38H48Z" fill="#d3dee8" />
    <path d="M144 30h24v9h-24Z" fill="#c6d3df" />
  </svg>
);

const ConnectionsPane: React.FC = () => (
  <div className="w-[472px] shrink-0 border-t-2 border-r-2 border-[#999799] bg-white flex flex-col">
    <div className="h-[50px] bg-[#bcbabc] font-bold pl-[1px] leading-[49px]">连接</div>
    <div className="h-[50px] border-b-2 border-[#4b4c72] bg-gradient-to-b from-[#fafafa] to-[#e3e1e2] flex items-center">
      <div className="-ml-[10px] flex"><GlobePlug /></div>
      <div className="ml-[4px]"><Caret /></div>
      <svg width="32" height="32" viewBox="0 0 16 16" className="ml-[14px]">
        <path d="M0 0H16V16H0Z" fill="#a3a5a8" />
        <path d="M2.5 .7H13.5V8.5H2.5Z" fill="#efefef" />
        <path d="M3 10.5H13V15.3H3Z" fill="#dcdcdc" />
        <path d="M4.5 11.3H7.5V14.5H4.5Z" fill="#8f9194" />
        <path d="M.6 1h1v2h-1ZM14.4 1h1v2h-1Z" fill="#eee" />
      </svg>
      <div className="ml-[14px]"><Separator /></div>
      <svg width="28" height="32" viewBox="0 0 14 16" className="ml-[8px]">
        <path d="M.5 3.5H13.5V15.5H.5Z" fill="#d9d9d9" stroke="#bdbdbd" />
        <path d="M2.5 10.5Q6.5 9 7 6L5.5 3.5 8.5 1 12 4 10.5 6Q8 10 3 12Z" fill="#b3b3b3" />
      </svg>
      <div className="ml-[18px]"><Separator /></div>
      <div className="ml-[8px]"><GlobePlug error /></div>
    </div>
    <div className="relative flex-1">
      <TreeLines />
      <div className="relative h-[40px] flex items-center pl-[30px] gap-[10px]"><StartPageIcon /><span className="mb-[4px]">起始页</span></div>
      <div className="relative h-[40px] ml-[27px] w-[369px] bg-[#cce8ff] flex items-center pl-[6px]"><HostIcon /></div>
      <div className="relative h-[40px] flex items-center pl-[68px] gap-[10px]"><PoolIcon /><span className="mb-[3px]">应用程序池</span></div>
      <div className="relative h-[40px] flex items-center pl-[68px] gap-[10px]"><SitesIcon /><span className="mb-[3px]">网站</span></div>
      <div className="relative h-[40px] mt-[320px] flex items-center pl-[68px] gap-[10px]"><FarmIcon /><span className="mb-[2px]"><Label text="Server Farms" /></span></div>
      <HostCover />
      <TreeCover />
    </div>
  </div>
);

const TitleRow: React.FC = () => (
  <div className="relative h-[104px] shrink-0">
    <div className="flex pt-[22px]">
      <svg width="64" height="64" viewBox="0 0 32 32" className="mt-[2px]">
        <Server x={15} y={4} w={17} h={27} />
        <Globe x={9.3} y={9.5} r={9.5} />
      </svg>
      <div className="ml-[144px] text-[40px] leading-[54px]">主页</div>
    </div>
    <svg width="240" height="92" className="absolute left-[36px] top-[20px]">
      <path d="M20 6Q4 22 4 48 8 76 36 88V6Z" fill="#c3c5c6" />
      <path d="M4 54Q10 78 36 88V54Z" fill="#efefef" />
      <path d="M12 18V54H4Q4 32 12 18Z" fill="#a7b6c6" />
      <path d="M36 6H180Q192 18 195 36L195 54 186 78 168 86 36 90Z" fill="#fefefe" />
      <g shapeRendering="crispEdges">
        <path d="M60 6h24v24H60Z" fill="#e5e4e5" />
        <path d="M84 6h24v24H84Z" fill="#e0dfe0" />
        <path d="M108 6h48v24h-48Z" fill="#dcdcdc" />
        <path d="M156 6h24v24h-24Z" fill="#f0f0f0" />
        <path d="M60 30h24v24H60Z" fill="#d1cccc" />
        <path d="M84 30h24v24H84Z" fill="#bcbcbc" />
        <path d="M108 30h24v24h-24Z" fill="#cdcdce" />
        <path d="M132 30h24v24h-24Z" fill="#aaa9a9" />
        <path d="M156 30h24v24h-24Z" fill="#d5d6d7" />
      </g>
      <path d="M180 6Q192 18 195 30H180Z" fill="#d2d2d2" />
      <path d="M180 30H195V54H180Z" fill="#bebebf" />
    </svg>
  </div>
);

const FilterBar: React.FC = () => (
  <div className="h-[56px] shrink-0 border-t-2 border-t-[#e2e2e2] border-b-2 border-b-[#4b4c72] bg-gradient-to-b from-[#fafafa] to-[#e2e0e1] flex items-center">
    <div className="w-[80px] pl-[14px] pb-[3px] whitespace-nowrap">筛选:</div>
    <div className="w-[242px] h-[48px] mt-[3px] bg-white flex justify-end pr-[2px]">
      <div className="w-[22px] bg-[#fafafa] flex items-center justify-center"><Caret /></div>
    </div>
    <svg width="28" height="28" viewBox="0 0 14 14" className="ml-[8px]">
      <path d="M0 .8H14L9 7.5V13L6 14V7.5Z" fill="#b9b9b9" />
      <path d="M2 1.5H8L7 7V13L6 14V7.5Z" fill="#dedede" />
    </svg>
    <div className="ml-[8px] w-[102px] pb-[3px] text-[#707070] whitespace-nowrap">开始(<span className="underline underline-offset-4">G</span>)</div>
    <Caret className="text-[#9b9b9b] ml-[2px]" />
    <svg width="32" height="32" viewBox="0 0 16 16" className="ml-[10px]">
      <path d="M.5.5H11.5V10.5H.5Z" fill="#fff" stroke="#8e9499" />
      <path d="M0 1h12" stroke="#8e9499" strokeWidth="1.4" />
      <path d="M5 6.5H15.5V15.5H5Z" fill="#fff" stroke="#8e9499" />
      <path d="M8.5 9.5h5.5M8.5 12.5h5.5" stroke="#46659d" strokeWidth="1.4" strokeDasharray="1.4 .8" />
      <path d="M1 7Q1.5 12 5 12V14.5L9 11 5 7.8V10Q3 10 2.6 7Z" fill="#2b98dc" stroke="#1d6aa6" strokeWidth="0.4" />
    </svg>
    <div className="ml-[6px] w-[148px] pb-[3px] whitespace-nowrap">全部显示(<span className="underline underline-offset-4">A</span>)</div>
    <Separator />
    <div className="ml-[8px] w-[114px] pb-[3px] whitespace-nowrap">分组依据:</div>
    <div className="w-[230px] h-[50px] mt-[1px] bg-white flex justify-between items-center pl-[8px] pr-[2px]">
      <span className="pb-[2px]">区域</span>
      <div className="w-[22px] h-full bg-[#fafafa] flex items-center justify-center"><Caret /></div>
    </div>
    <svg width="30" height="30" viewBox="0 0 15 15" className="ml-[6px]">
      <path d="M.5.5H14.5V14.5H.5Z" fill="#f7f7f7" stroke="#8b9299" />
      <path d="M0 1.5H15" stroke="#cfdbe4" /><path d="M0 2.5H15" stroke="#6e8093" />
      <path d="M2 4.2h4.8v3.8H2ZM8.2 4.2H13v3.8H8.2ZM2 9.2h4.8V13H2ZM8.2 9.2H13V13H8.2Z" fill="#a2a5a8" />
      <path d="M3 5.2h2.8v1.8H3Z" fill="#b9d86c" /><path d="M9.2 5.2H12v1.8H9.2Z" fill="#8ad2ff" />
      <path d="M3 10.2h2.8V12H3Z" fill="#6a6ff0" /><path d="M9.2 10.2H12V12H9.2Z" fill="#ff9d80" />
    </svg>
    <Caret className="ml-[6px]" />
  </div>
);

const Annotations = () => (
  <svg width="2774" height="1012" className="absolute left-0 top-0 pointer-events-none" fill="none">
    <rect x="31" y="182" width="387" height="65" rx="5" stroke="#ff2214" strokeWidth="6" />
    <rect x="2276.5" y="461" width="175" height="139" rx="5" stroke="#ff2214" strokeWidth="6" />
    <path d="M428 221.5L1110 354 1720 474 2238 576 2240 573 2254 584.5 2237 589.5 2238 585.5 1720 481.5 1110 358.8 428 222.8Z" fill="#ff2214" />
  </svg>
);

const App: React.FC = () => (
  <div className="relative w-[2774px] h-[1012px] overflow-hidden bg-[#f5f5f5] flex flex-col text-[24px] text-black font-['Noto_Sans','Noto_Sans_CJK_SC',sans-serif]">
    <Defs />
    <MenuBar />
    <div className="flex-1 mt-[2px] flex gap-[12px] min-h-0">
      <ConnectionsPane />
      <div className="flex-1 min-w-0 border-t-2 border-l-2 border-[#999799] bg-white flex flex-col pl-[24px]">
        <TitleRow />
        <div className="flex-1 flex flex-col border-l-2 border-[#e2e2e2]">
          <FilterBar />
          <div className="pt-[4px]">
            {GROUPS.map((g) => (
              <section key={g.title} className={g.height}>
                <div className="h-[34px] flex items-center pl-[24px] gap-[9px] text-[#003399]">
                  <h2 className="whitespace-nowrap leading-[34px] pb-[1px]"><Label text={g.title} /></h2>
                  <div className="flex-1 h-[2px] bg-[#b1c0e2]" />
                </div>
                <div className="pt-[12px] -ml-[1px]">
                  {g.rows.map((row, i) => (
                    <div key={i} className="flex">
                      {row.map((item, n) => <FeatureItem key={n} item={item} />)}
                    </div>
                  ))}
                </div>
              </section>
            ))}
          </div>
        </div>
      </div>
    </div>
    <Annotations />
  </div>
);

export default App;
